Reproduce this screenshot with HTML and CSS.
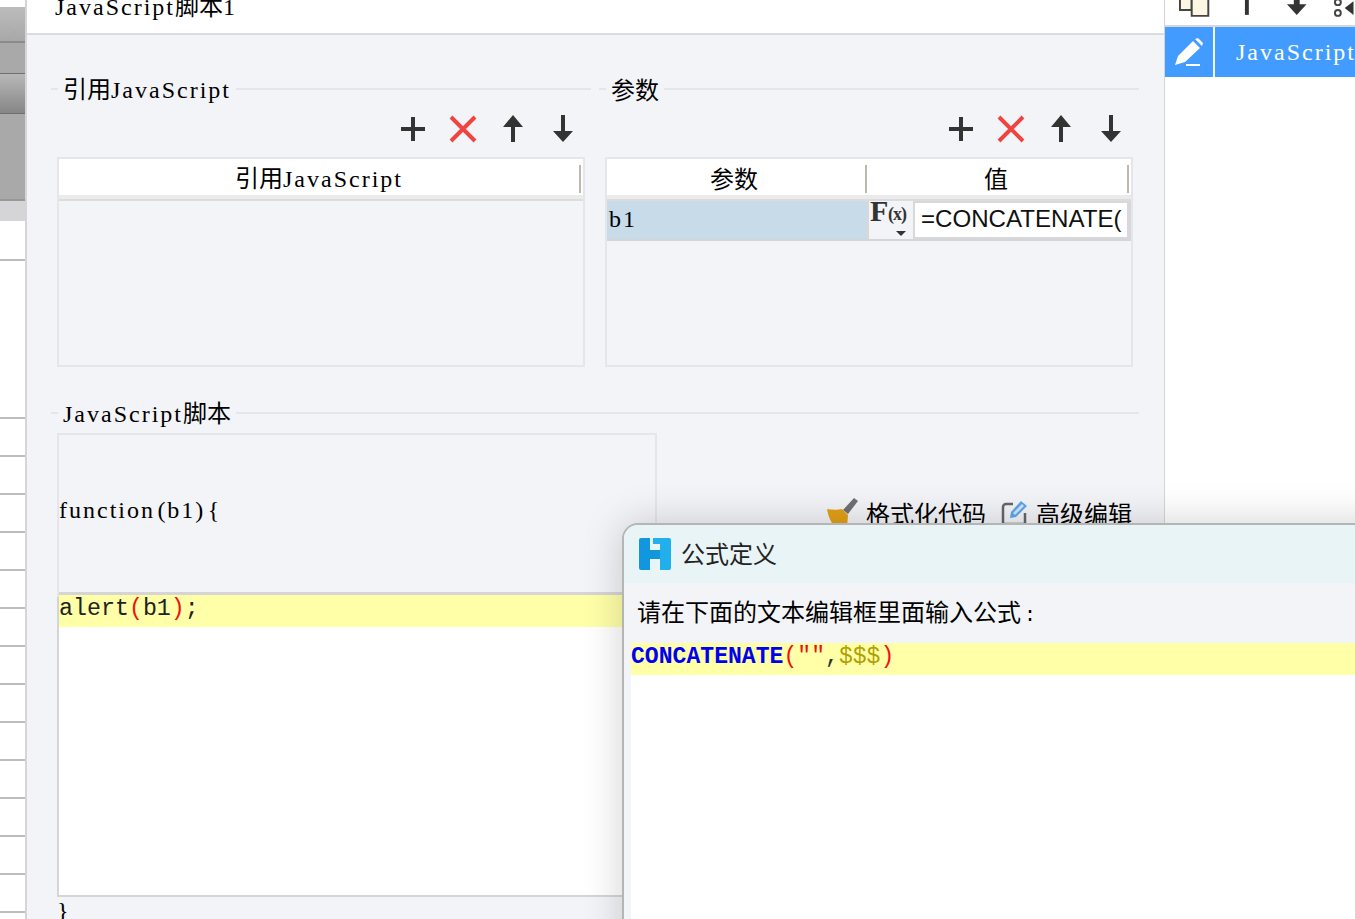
FILE: index.html
```html
<!DOCTYPE html>
<html lang="zh">
<head>
<meta charset="utf-8">
<title>JavaScript脚本</title>
<link rel="stylesheet" href="styles.css">
</head>
<body>
<div class="app">
  <aside class="sheet">
    <div class="sheet-seg seg-a"><span class="sheet-tick"></span></div>
    <div class="sheet-seg seg-b"></div>
    <div class="sheet-seg seg-c"></div>
    <div class="sheet-seg seg-d"></div>
    <div class="seg-e"></div>
    <div class="sheet-row"></div>
    <div class="sheet-row sheet-row-tall"></div>
    <div class="sheet-rows"></div>
  </aside>

  <main class="main">
    <header class="main-head"><span class="t"><span class="lat">JavaScript</span>脚本<span class="lat">1</span></span></header>
    <div class="main-body">
      <div class="groups">
        <section class="group">
          <div class="legend"><span class="legend-dash"></span><span class="legend-text t">引用<span class="lat">JavaScript</span></span><span class="legend-line"></span></div>
          <div class="tools">
            <button class="tool"><svg viewBox="0 0 30 30" width="30" height="30"><path d="M15 3v24M3 15h24" stroke="#333" stroke-width="4" fill="none"/></svg></button>
            <button class="tool"><svg viewBox="0 0 30 30" width="30" height="30"><path d="M3 3l24 24M27 3L3 27" stroke="#ee4540" stroke-width="4" fill="none"/></svg></button>
            <button class="tool"><svg viewBox="0 0 30 30" width="30" height="30"><path d="M15 1l10 12h-8v15h-4V13H5z" fill="#333"/></svg></button>
            <button class="tool"><svg viewBox="0 0 30 30" width="30" height="30"><path d="M15 28L5 17h8V1h4v16h8z" fill="#333"/></svg></button>
          </div>
          <div class="table">
            <div class="thead thead-one"><div class="th t"><span>引用<span class="lat">JavaScript</span></span></div></div>
          </div>
        </section>
        <section class="group">
          <div class="legend"><span class="legend-dash"></span><span class="legend-text t">参数</span><span class="legend-line"></span></div>
          <div class="tools">
            <button class="tool"><svg viewBox="0 0 30 30" width="30" height="30"><path d="M15 3v24M3 15h24" stroke="#333" stroke-width="4" fill="none"/></svg></button>
            <button class="tool"><svg viewBox="0 0 30 30" width="30" height="30"><path d="M3 3l24 24M27 3L3 27" stroke="#ee4540" stroke-width="4" fill="none"/></svg></button>
            <button class="tool"><svg viewBox="0 0 30 30" width="30" height="30"><path d="M15 1l10 12h-8v15h-4V13H5z" fill="#333"/></svg></button>
            <button class="tool"><svg viewBox="0 0 30 30" width="30" height="30"><path d="M15 28L5 17h8V1h4v16h8z" fill="#333"/></svg></button>
          </div>
          <div class="table">
            <div class="thead thead-two"><div class="th t">参数</div><div class="th t">值</div></div>
            <div class="param-row">
              <div class="param-name t"><span class="lat">b1</span></div>
              <div class="fx"><span class="fx-f">F</span><span class="fx-x">(x)</span><span class="fx-caret"></span></div>
              <div class="param-value">=CONCATENATE(</div>
            </div>
          </div>
        </section>
      </div>

      <section class="script">
        <div class="legend"><span class="legend-dash"></span><span class="legend-text t"><span class="lat">JavaScript</span>脚本</span><span class="legend-line"></span></div>
        <div class="script-row">
          <div class="fn-head t"><span class="lat">function</span> <span class="lat">(b1)</span> <span class="lat">{</span></div>
          <div class="script-tools">
            <span class="script-tool t"><svg viewBox="0 0 32 30" width="32" height="30"><path d="M17 12L28 0l4 3-10 13z" fill="#6f7076"/><path d="M1 11c5 1 11 1 15 0l6 6-1 13H10C5 25 2 18 1 11z" fill="#e2a018"/></svg>格式化代码</span>
            <span class="script-tool t"><svg viewBox="0 0 28 28" width="28" height="28"><path d="M13 5H6a3 3 0 0 0-3 3v17h22V14" fill="none" stroke="#666" stroke-width="2.5"/><path d="M10 19l1-6L21 2l6 5-11 11z" fill="#5da5ee"/><path d="M13 14l9-9 2 2-9 9z" fill="#cfe4fa"/></svg>高级编辑</span>
          </div>
        </div>
        <div class="code">
          <div class="code-line"><span>alert</span><span class="paren">(</span><span>b1</span><span class="paren">)</span><span>;</span></div>
        </div>
        <div class="code-end t"><span class="lat">}</span></div>
      </section>
    </div>
  </main>

  <aside class="side">
    <div class="side-tools">
      <svg viewBox="0 0 32 20" width="32" height="20"><path d="M1 -4h12v14H1z" fill="#fdf6e3" stroke="#444" stroke-width="2"/><path d="M13 -3h17v19H13z" fill="#fdf6e3" stroke="#444" stroke-width="2"/></svg>
      <svg class="side-up" viewBox="0 0 10 20" width="10" height="20"><path d="M3 -4h4v19H3z" fill="#333"/></svg>
      <svg class="side-down" viewBox="0 0 22 20" width="22" height="20"><path d="M8 -4h6v8h7L11 15 1 4h7z" fill="#333"/></svg>
      <svg class="side-more" viewBox="0 0 24 20" width="24" height="20"><circle cx="6" cy="2" r="3" fill="none" stroke="#444" stroke-width="2"/><circle cx="6" cy="13" r="3" fill="none" stroke="#444" stroke-width="2"/><path d="M13 8l9-7v14z" fill="#333"/></svg>
    </div>
    <div class="side-row">
      <div class="side-icon"><svg viewBox="0 0 30 28" width="30" height="28"><path d="M1 27l3-9L19 3l7 7-15 14zM21 1l3-1 5 5-1 3z" fill="#fff"/><path d="M12 26h14v2H12z" fill="#fff"/></svg></div>
      <div class="side-label t"><span class="lat">JavaScript</span></div>
    </div>
  </aside>

  <div class="dialog">
    <div class="dialog-title">
      <svg viewBox="0 0 32 32" width="32" height="32"><path d="M0 2a2 2 0 0 1 2-2h9v12h10v9H11v11H2a2 2 0 0 1-2-2z" fill="#1296e0"/><path d="M14 0h16a2 2 0 0 1 2 2v28a2 2 0 0 1-2 2h-9V6h-7z" fill="#22b0ec"/></svg>
      <span class="dialog-name">公式定义</span>
    </div>
    <div class="dialog-body">
      <div class="dialog-prompt">请在下面的文本编辑框里面输入公式<span class="colon">:</span></div>
      <div class="formula">
        <div class="formula-line"><span class="fn">CONCATENATE</span><span class="paren">(</span><span class="str">""</span><span class="comma">,</span><span class="ph">$$$</span><span class="paren">)</span></div>
      </div>
    </div>
  </div>
</div>
</body>
</html>
```

FILE: styles.css
```css
* { box-sizing: border-box; }
html, body { margin: 0; padding: 0; height: 100%; overflow: hidden; background: #fff; }
body { font-family: "Noto Sans CJK SC", "Liberation Sans", sans-serif; color: #000; }

.app { position: relative; display: flex; width: 1355px; height: 919px; overflow: hidden; }

/* text in the SimSun-like rendering: CJK 24px cells, latin about 12px cells */
.t { font-size: 24px; line-height: 30px; font-family: "Noto Sans CJK SC", sans-serif; white-space: nowrap; }
.lat { font-family: "Liberation Serif", serif; font-size: 24px; letter-spacing: 2px; }

/* left sheet strip */
.sheet { flex: none; width: 27px; padding-top: 7px; border-right: 2px solid #d5d5d7; display: flex; flex-direction: column; }
.sheet-seg { flex: none; border-bottom: 1px solid #6f6f6f; }
.seg-a { height: 36px; background: linear-gradient(#bcbcbc, #a8a8a8); border-bottom: 2px solid #8a8a8a; position: relative; }
.sheet-tick { position: absolute; left: 13px; bottom: 0; width: 2px; height: 11px; background: #aaa; }
.seg-b { height: 31px; background: #a9a9a9; }
.seg-c { height: 40px; background: linear-gradient(#b8b8b8, #868686); }
.seg-d { height: 87px; background: #a9a9a9; border-bottom: 2px solid #989898; }
.seg-e { flex: none; height: 20px; background: #d5d5d7; }
.sheet-row { flex: none; height: 40px; border-bottom: 2px solid #bdbdbd; }
.sheet-row-tall { height: 158px; }
.sheet-rows { flex: 1; background: repeating-linear-gradient(#fff 0, #fff 36px, #bdbdbd 36px, #bdbdbd 38px); }

/* main panel */
.main { flex: none; width: 1137px; display: flex; flex-direction: column; background: #f3f4f7; }
.main-head { flex: none; height: 35px; background: #fff; border-bottom: 2px solid #dcdce0; padding: 0 0 11px 28px; display: flex; align-items: flex-end; overflow: hidden; }
.main-body { flex: 1; min-height: 0; padding: 39px 25px 0 24px; }

.groups { display: grid; grid-template-columns: 540px 540px; column-gap: 8px; }
.legend { display: flex; align-items: center; height: 30px; }
.legend-dash { flex: none; width: 7px; height: 2px; background: #e6e6ea; }
.legend-text { flex: none; padding: 0 5px; }
.legend-line { flex: 1; height: 2px; background: #e6e6ea; }

.tools { display: flex; justify-content: flex-end; gap: 20px; height: 40px; margin-top: 5px; padding-right: 13px; align-items: center; }
.tool { width: 30px; height: 30px; padding: 0; border: 0; background: none; display: flex; }

.table { width: 528px; height: 210px; margin: 8px 0 0 6px; border: 2px solid #e6e6ea; display: flex; flex-direction: column; }
.thead { flex: none; height: 42px; background: #fff; display: grid; border-bottom: 2px solid #dcdcde; box-shadow: inset 0 -4px 0 #ebebec; }
.thead-one { grid-template-columns: 1fr; }
.thead-two { grid-template-columns: 260px 1fr; }
.th { display: flex; align-items: center; justify-content: center; height: 36px; position: relative; padding: 2px 6px 0 0; }
.thead-one .th { padding-right: 4px; }
.th::after { content: ""; position: absolute; right: 2px; top: 6px; width: 2px; height: 28px; background: #bdb9ad; }
.thead-two .th:first-child::after { right: 0; }

.param-row { flex: none; height: 40px; display: flex; background: #d8d8da; border-bottom: 2px solid #d5d5d7; }
.param-name { flex: none; width: 260px; background: #c7dbe9; line-height: 32px; padding-left: 2px; }
.fx { position: relative; flex: none; width: 44px; margin-left: 2px; background: #f3f4f7; }
.fx-f { position: absolute; left: 1px; top: -6px; font: bold 30px/32px "Liberation Serif", serif; color: #333; }
.fx-x { position: absolute; left: 19px; top: 3px; font: bold 18px/20px "Liberation Serif", serif; letter-spacing: -1px; color: #333; }
.fx-caret { position: absolute; left: 27px; bottom: 3px; border: 5px solid transparent; border-top-color: #333; border-bottom: 0; }
.param-value { flex: 1; margin: 2px 4px 2px 2px; background: #fff; font: 24.1px/31px "Liberation Sans", sans-serif; padding-left: 6px; overflow: hidden; white-space: nowrap; color: #111; }

/* script section */
.script { margin-top: 31px; }
.script-row { display: flex; align-items: center; width: 1076px; height: 164px; margin: 5px 0 0 6px; }
.fn-head { flex: none; width: 600px; height: 164px; border: 2px solid #e6e6ea; border-bottom: 0; line-height: 146px; white-space: pre; word-spacing: -3px; }
.script-tools { margin-left: auto; display: flex; align-items: center; gap: 14px; padding: 0 1px 4px 0; }
.script-tool { display: flex; align-items: center; gap: 8px; }
.code { width: 600px; height: 305px; margin-left: 6px; margin-top: -5px; background: #fff; border: solid #d5d5d7; border-width: 3px 0 2px 2px; font: 23.3px/28px "Liberation Mono", monospace; color: #222; }
.code-line { background: #ffffa8; height: 32px; white-space: pre; }
.paren { color: #f01010; }
.code-end { margin-left: 6px; line-height: 24px; }

/* right panel */
.side { flex: none; width: 191px; background: #fff; border-left: 1px solid #d5d5d7; }
.side-tools { height: 27px; border-bottom: 2px solid #d8d8d8; display: flex; align-items: flex-start; padding-left: 14px; }
.side-up { margin-left: 32px; }
.side-down { margin-left: 34px; }
.side-more { margin-left: 24px; }
.side-row { height: 50px; display: flex; background: #429cff; }
.side-icon { flex: none; width: 50px; display: flex; align-items: center; justify-content: center; border-right: 2px solid #f2f4f7; }
.side-label { flex: 1; min-width: 0; color: #fff; padding-left: 21px; line-height: 46px; overflow: hidden; }

/* formula dialog */
.dialog { position: absolute; left: 622px; top: 523px; width: 900px; height: 600px; background: #f3f4f7; border: 2px solid #b5b5b5; border-radius: 16px 0 0 0; box-shadow: 0 0 40px rgba(0, 0, 0, .18); overflow: hidden; }
.dialog-title { display: flex; align-items: center; gap: 10px; height: 58px; padding: 0 0 0 15px; background: #e9f4f7; }
.dialog-name { font-size: 24px; line-height: 28px; padding-bottom: 2px; color: #222; }
.dialog-prompt { height: 60px; padding: 13px 0 0 13px; font-size: 24px; line-height: 30px; white-space: nowrap; }
.colon { margin-left: 3px; font-family: "Liberation Mono", monospace; font-size: 20px; }
.formula { margin-left: 7px; height: 600px; background: #fff; font: 23.1px/28px "Liberation Mono", monospace; }
.formula-line { background: #ffffa8; height: 32px; white-space: pre; }
.fn { color: #0000f0; font-weight: bold; }
.str { color: #f01010; }
.comma { color: #333; }
.ph { color: #b0a000; }
```
